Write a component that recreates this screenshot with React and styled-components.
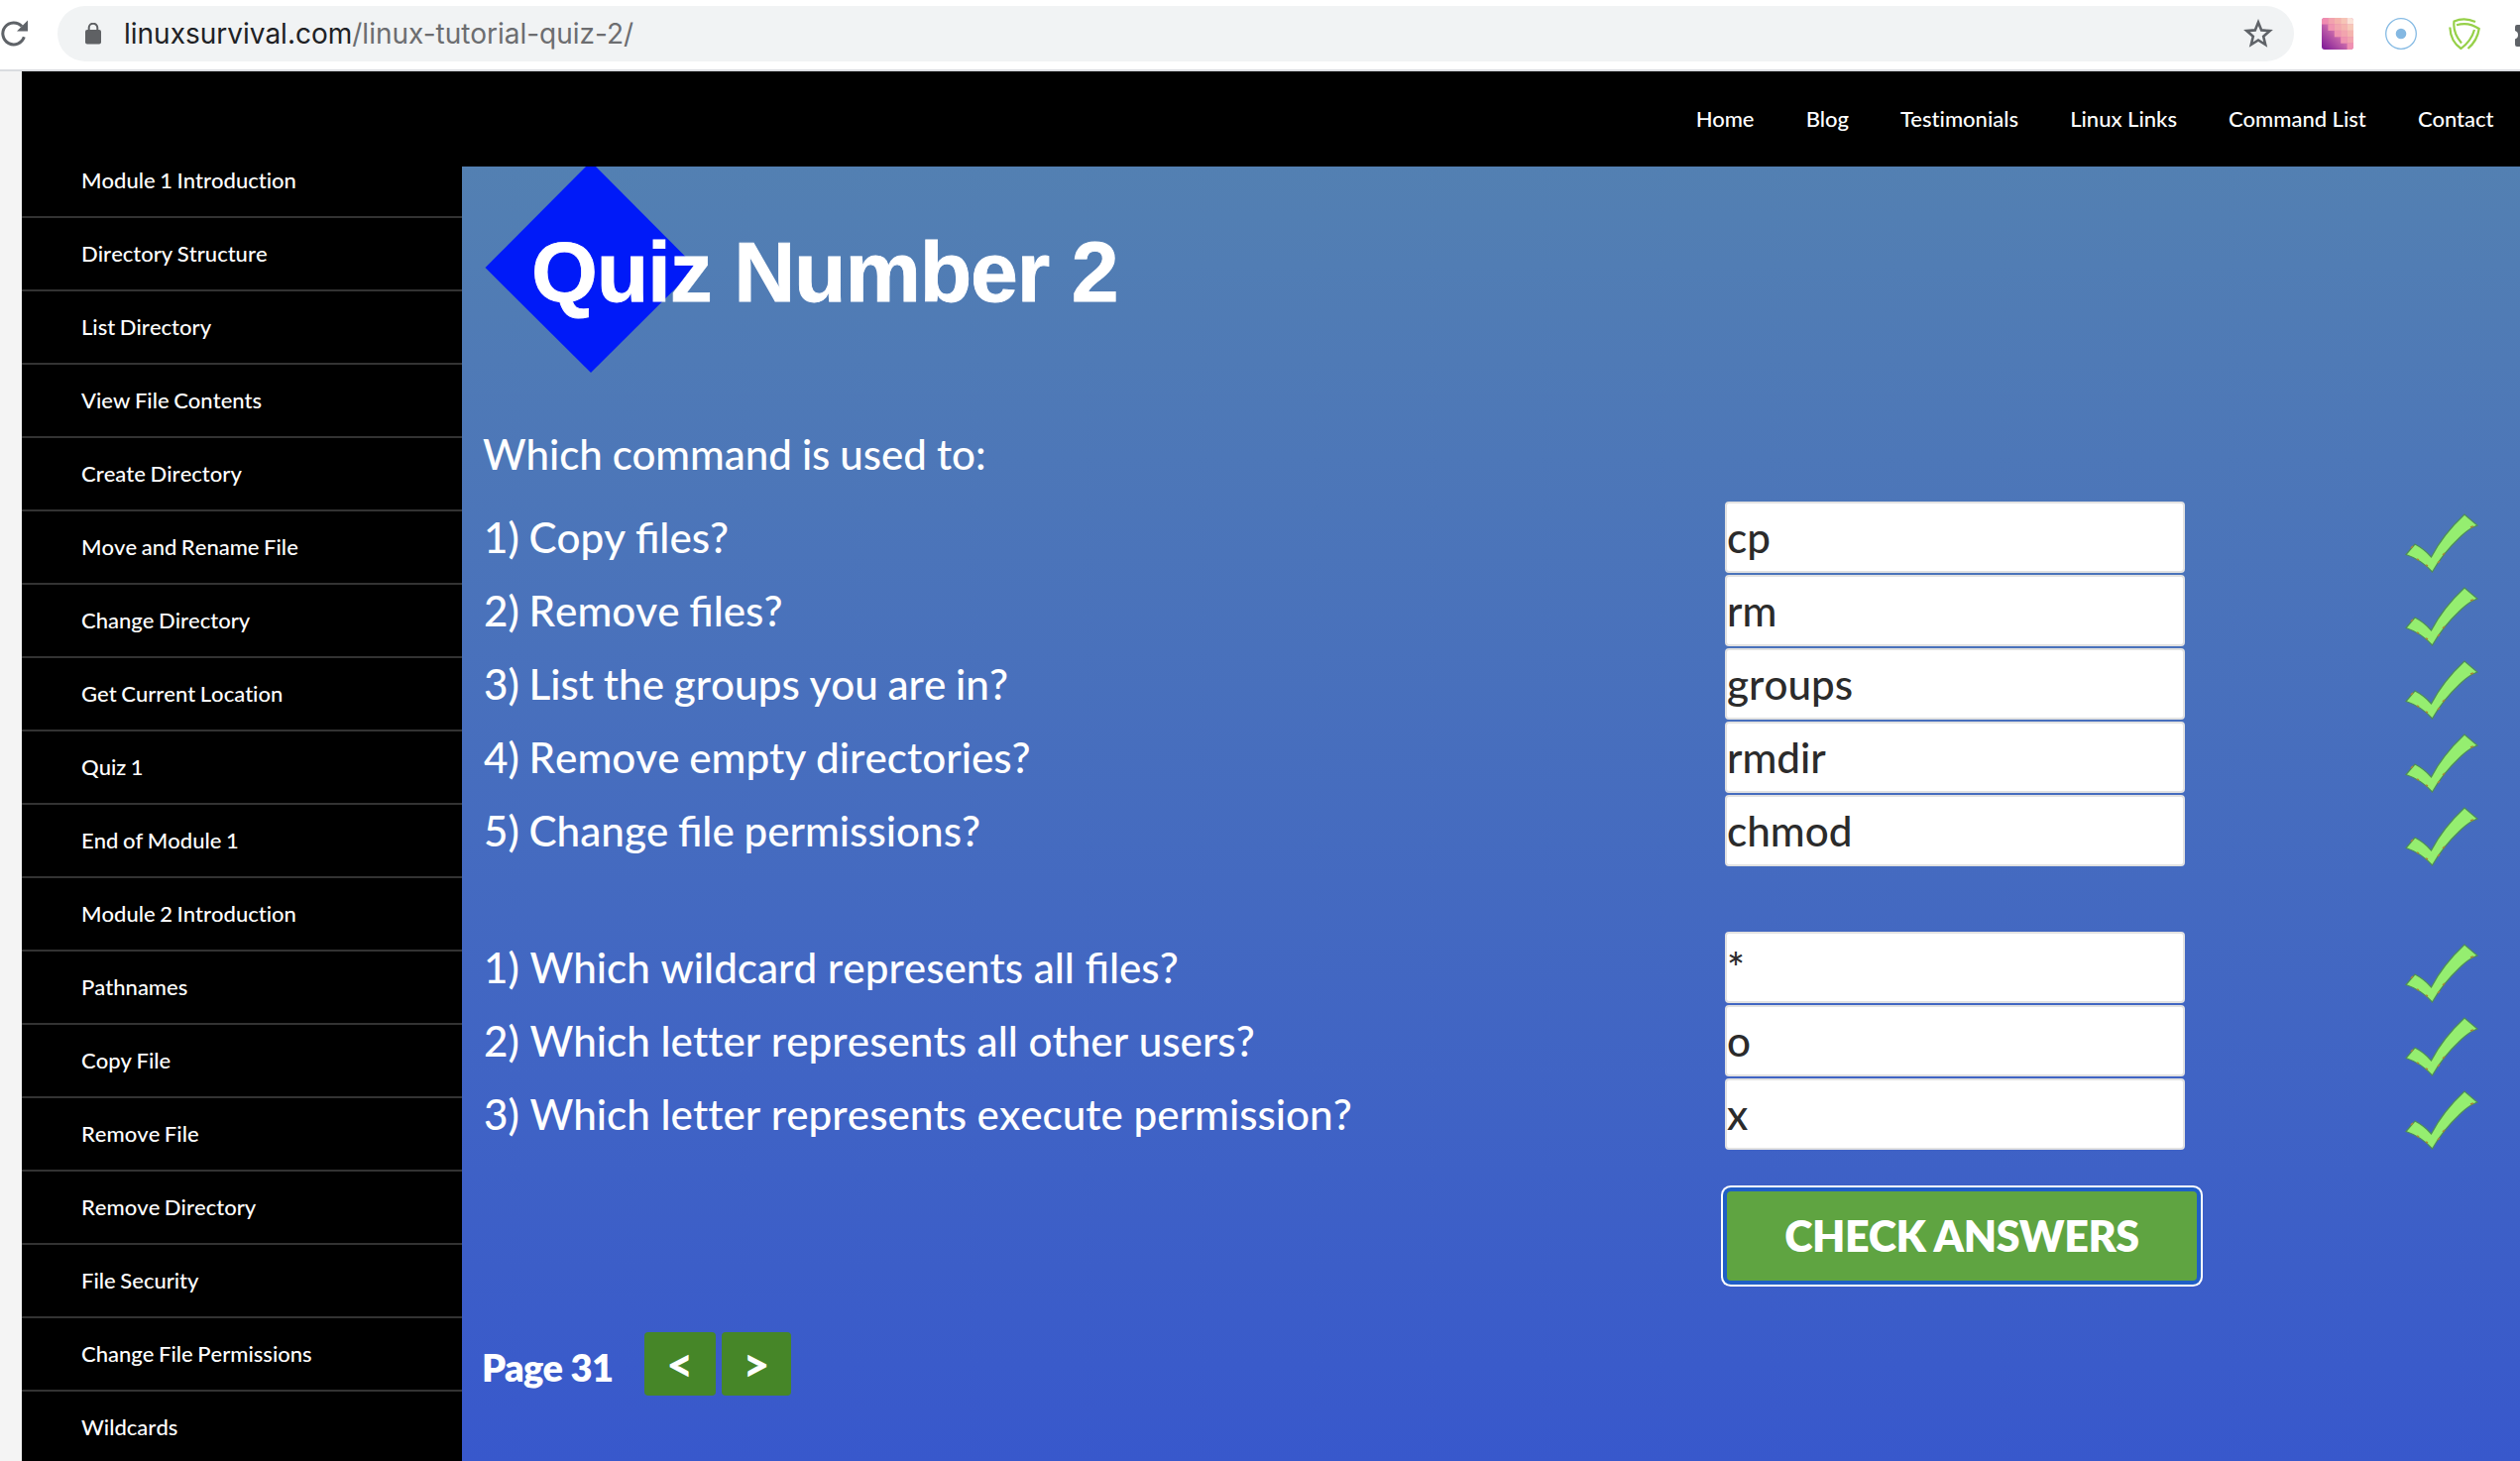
import React from "react";
import styled, { createGlobalStyle } from "styled-components";

const Global = createGlobalStyle`
  * { box-sizing: border-box; }
  html, body { margin: 0; padding: 0; background: #f4f4f4; overflow: hidden; }
`;

const Browser = styled.div`
  width: 2542px;
  height: 1474px;
  overflow: hidden;
  display: flex;
  flex-direction: column;
  font-family: Lato, "Liberation Sans", sans-serif;
  font-weight: 500;
`;

const Toolbar = styled.div`
  flex: 0 0 72px;
  display: flex;
  align-items: center;
  background: #fff;
  border-bottom: 2px solid #dadce0;
  padding-bottom: 2px;
`;

const ReloadIcon = styled.svg`
  width: 30px;
  height: 30px;
  margin-right: 28px;
  flex: none;
`;

const AddressBar = styled.div`
  width: 2256px;
  height: 56px;
  flex: none;
  display: flex;
  align-items: center;
  border-radius: 28px;
  background: #f1f3f4;
  padding: 0 21px 0 27px;
`;

const LockIcon = styled.svg`
  width: 18px;
  height: 22px;
  flex: none;
`;

const Url = styled.div`
  flex: 1;
  margin-left: 22px;
  font: 400 28px/56px Inter, sans-serif;
  color: #202124;
  white-space: nowrap;
`;

const UrlPath = styled.span`
  color: #6c6d70;
`;

const StarIcon = styled.svg`
  width: 30px;
  height: 30px;
  flex: none;
`;

const Extensions = styled.div`
  display: flex;
  align-items: center;
  gap: 32px;
  margin-left: 28px;
  flex: none;
`;

const ExtIcon = styled.svg`
  width: 32px;
  height: 32px;
  flex: none;
`;

const Page = styled.div`
  flex: 1;
  min-height: 0;
  display: flex;
  margin-left: 22px;
  background: #000;
  color: #fff;
`;

const Sidebar = styled.nav`
  flex: 0 0 444px;
  padding-top: 74px;
`;

const SideLink = styled.div`
  height: 74px;
  border-bottom: 2px solid #333;
  padding-left: 60px;
  font-size: 22px;
  line-height: 72px;
  font-kerning: none;
  font-variant-ligatures: none;
  word-spacing: -1px;
  white-space: nowrap;
`;

const Main = styled.main`
  flex: 1;
  min-width: 0;
  display: flex;
  flex-direction: column;
`;

const TopNav = styled.nav`
  flex: 0 0 96px;
  display: flex;
  justify-content: flex-end;
  gap: 52.1px;
  padding-right: 26.5px;
  font-size: 22px;
  line-height: 96px;
  font-variant-ligatures: none;
  white-space: nowrap;
`;

const Content = styled.section`
  flex: 1;
  min-height: 0;
  overflow: hidden;
  padding: 0 0 0 22px;
  background: linear-gradient(#5380b2, #3858cc);
`;

const Banner = styled.header`
  display: flex;
  height: 210px;
`;

const Diamond = styled.svg`
  width: 214px;
  height: 210px;
  flex: none;
`;

const Title = styled.h1`
  margin: 63px 0 0 -166px;
  font: 700 86px/86px "Liberation Sans", Arial, sans-serif;
  letter-spacing: -1.2px;
  -webkit-text-stroke: 0.8px #fff;
  white-space: nowrap;
`;

const Prompt = styled.p`
  margin: 43px 0 10px -1px;
  font-size: 42px;
  line-height: 74px;
  word-spacing: -0.6px;
`;

const QuestionGroup = styled.div`
  margin-bottom: ${(p) => p.$gap}px;
  word-spacing: ${(p) => p.$wordGap}px;
`;

const QuestionRow = styled.label`
  display: grid;
  grid-template-columns: 1252px 682px 80px;
  align-items: center;
  height: 74px;
  font-size: 42.200px;
  font-kerning: none;
  white-space: nowrap;
`;

const QuestionText = styled.span`
  padding-bottom: 2px;
`;

const Word = styled.span`
  font-variant-ligatures: ${(p) => (p.$joined ? "normal" : "none")};
`;

const Answer = styled.input`
  display: block;
  width: 464px;
  height: 72px;
  border: 2px solid #e2e2e2;
  border-radius: 4px;
  padding: 0 0 2px;
  outline: 0;
  background: #fff;
  color: #2b2b2b;
  font: 500 42.200px/66px Lato, sans-serif;
  font-kerning: none;
`;

const CheckIcon = styled.svg`
  width: 80px;
  height: 74px;
`;

const SubmitRow = styled.div`
  padding-left: 1254px;
`;

const Submit = styled.button`
  display: block;
  width: 474px;
  height: 90px;
  border: 0;
  border-radius: 4px;
  background: #5fa441;
  box-shadow: 0 0 0 4px #205fc6, 0 0 0 6px #fff;
  color: #fff;
  font: 800 43px/90px Lato, sans-serif;
  letter-spacing: -0.4px;
  white-space: nowrap;
  padding: 0;
`;

const Pager = styled.div`
  display: flex;
  align-items: flex-start;
  margin: 52px 0 0 -2px;
`;

const PageLabel = styled.span`
  width: 164px;
  font-size: 38px;
  font-weight: 800;
  line-height: 70px;
  letter-spacing: -0.6px;
`;

const PagerButton = styled.button`
  width: ${(p) => p.$w}px;
  height: 64px;
  margin-right: 6px;
  border: 0;
  border-radius: 4px;
  padding: 0;
  background: #468628;
  color: #fff;
  font: 900 47px/64px Lato, sans-serif;
`;

const NAV = ["Home", "Blog", "Testimonials", "Linux Links", "Command List", "Contact"];

const MODULES = [
  "Module 1 Introduction", "Directory Structure", "List Directory", "View File Contents",
  "Create Directory", "Move and Rename File", "Change Directory", "Get Current Location",
  "Quiz 1", "End of Module 1", "Module 2 Introduction", "Pathnames", "Copy File",
  "Remove File", "Remove Directory", "File Security", "Change File Permissions", "Wildcards",
];

const COMMANDS = [
  ["1) Copy files?", "cp"],
  ["2) Remove files?", "rm"],
  ["3) List the groups you are in?", "groups"],
  ["4) Remove empty directories?", "rmdir"],
  ["5) Change file permissions?", "chmod"],
];

const LETTERS = [
  ["1) Which wildcard represents all files?", "*"],
  ["2) Which letter represents all other users?", "o"],
  ["3) Which letter represents execute permission?", "x"],
];

const Check = () => (
  <CheckIcon viewBox="0 0 80 74">
    <path
      d="M5 54.500L14 44Q23 48.500 30.500 57Q42 34.500 64 14L77 25Q68 28.500 60 36.500Q42 53.500 31.500 72Q21 60 5 54.500Z"
      fill="#95ee70" stroke="#4c8c58" strokeWidth="1.2" />
    <path d="M10 48l2-2M16 59l2 1M25 65l2 1M37 63l2-2M42 55l2-2M70 27l3-1" stroke="#a8843a" strokeWidth="1.6" />
  </CheckIcon>
);

/* Only the "fi" pair is joined; "tt" and "ti" stay as separate letters. */
const Question = ({ text }) => (
  <QuestionText>
    {text.split(/(\s)/).map((w, i) => <Word key={i} $joined={w.startsWith("fi")}>{w}</Word>)}
  </QuestionText>
);

const Group = ({ items, gap, wordGap }) => (
  <QuestionGroup $gap={gap} $wordGap={wordGap}>
    {items.map(([q, a]) => (
      <QuestionRow key={q}>
        <Question text={q} />
        <Answer defaultValue={a} />
        <Check />
      </QuestionRow>
    ))}
  </QuestionGroup>
);

const PIXELS = [
  ["#f08cb0", "#f2a2ae", "#f4b2ac", "#f6c4b6", "#fbe2d8"],
  ["", "#f094b0", "#f2a6ae", "#f4b4ae", "#f6c8b8"],
  ["", "", "#f094b0", "#f2a4ae", "#f4b4ae"],
  ["", "", "", "#f094b0", "#f2a4ae"],
  ["", "", "", "", "#f090b2"],
];

export default function App() {
  return (
    <Browser>
      <Global />
      <Toolbar>
        <ReloadIcon viewBox="0 0 30 30" fill="none">
          <path d="M24.300 18.300A11 11 0 1 1 22 7.500" stroke="#5f6368" strokeWidth="3" />
          <path d="M28 1.500V12.500H17Z" fill="#5f6368" />
        </ReloadIcon>
        <AddressBar>
          <LockIcon viewBox="0 0 18 22">
            <rect x="1" y="7" width="16" height="14.500" rx="2" fill="#5f6164" />
            <path d="M4.700 8V5a4.300 4.300 0 0 1 8.600 0V8" fill="none" stroke="#5f6164" strokeWidth="2" />
          </LockIcon>
          <Url>linuxsurvival.com<UrlPath>/linux-tutorial-quiz-2/</UrlPath></Url>
          <StarIcon viewBox="0 0 30 30">
            <path d="M15 3.500L18.200 11.400L26.700 12.100L20.200 17.700L22.200 26L15 21.500L7.800 26L9.800 17.700L3.300 12.100L11.800 11.400Z" fill="none" stroke="#5f6368" strokeWidth="2.600" />
          </StarIcon>
        </AddressBar>
        <Extensions>
          <ExtIcon viewBox="0 0 32 32">
            <defs>
              <linearGradient id="dusk" x1="0" y1="1" x2="0.700" y2="0.300">
                <stop offset="0" stopColor="#7a1696" />
                <stop offset="0.650" stopColor="#c867aa" />
                <stop offset="1" stopColor="#e684b0" />
              </linearGradient>
              <clipPath id="tile"><rect width="32" height="32" rx="3" /></clipPath>
            </defs>
            <g clipPath="url(#tile)">
              <rect width="32" height="32" fill="url(#dusk)" />
              {PIXELS.flatMap((row, y) => row.map((c, x) => c && (
                <rect key={`${x}-${y}`} x={x * 6.4} y={y * 6.4} width="6.5" height="6.5" fill={c} />
              )))}
            </g>
          </ExtIcon>
          <ExtIcon viewBox="0 0 32 32">
            <circle cx="16" cy="16" r="15.300" fill="none" stroke="#86bbe4" strokeWidth="1.300" />
            <circle cx="16" cy="16" r="5.300" fill="#84b8e2" />
          </ExtIcon>
          <ExtIcon viewBox="0 0 32 32" fill="none" stroke="#96d048" strokeWidth="2.200">
            <path d="M27 4Q16-1 5.500 3.500Q4 15 13 25.500" />
            <path d="M8 7.300Q20 3.500 30.700 11Q29 23 19.500 31" />
            <path d="M1.300 9.500Q2 24 12.500 31Q23 23 26 12" />
          </ExtIcon>
          <ExtIcon viewBox="0 0 32 32">
            <path d="M5 7H20V29H5a2 2 0 0 1-2-2V21.500a4.500 4.500 0 0 0 0-8.500V9a2 2 0 0 1 2-2Z" fill="#5f6368" />
          </ExtIcon>
        </Extensions>
      </Toolbar>
      <Page>
        <Sidebar>
          {MODULES.map((m) => <SideLink key={m}>{m}</SideLink>)}
        </Sidebar>
        <Main>
          <TopNav>{NAV.map((n) => <span key={n}>{n}</span>)}</TopNav>
          <Content>
            <Banner>
              <Diamond viewBox="0 0 214 210">
                <path d="M108-5L214.500 102L108 208L1.500 102Z" fill="#001af8" />
              </Diamond>
              <Title>Quiz Number 2</Title>
            </Banner>
            <Prompt>Which command is used to:</Prompt>
            <Group items={COMMANDS} gap={64} wordGap={-1} />
            <Group items={LETTERS} gap={41} wordGap={-0.1} />
            <SubmitRow><Submit>CHECK ANSWERS</Submit></SubmitRow>
            <Pager>
              <PageLabel>Page 31</PageLabel>
              <PagerButton $w={72}>&lt;</PagerButton>
              <PagerButton $w={70}>&gt;</PagerButton>
            </Pager>
          </Content>
        </Main>
      </Page>
    </Browser>
  );
}
